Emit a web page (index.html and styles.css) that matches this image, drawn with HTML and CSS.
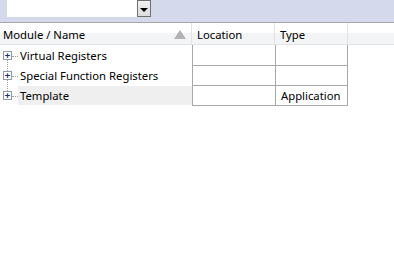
FILE: index.html
```html
<!DOCTYPE html>
<html lang="en">
<head>
  <meta charset="UTF-8">
  <title>Modules</title>
  <link rel="stylesheet" href="styles.css">
</head>
<body>
  <div class="toolbar">
    <div class="combo">
      <div class="combo-field"></div>
      <div class="combo-button"><span class="arrow"></span></div>
    </div>
  </div>

  <div class="grid">
    <div class="head name">Module / Name <span class="sort"></span></div>
    <div class="head">Location</div>
    <div class="head">Type</div>
    <div class="head filler"></div>

    <div class="tree first"><span class="expander">+</span><span class="label">Virtual Registers</span></div>
    <div class="cell"></div>
    <div class="cell last"></div>
    <div class="filler-cell"></div>

    <div class="tree"><span class="expander">+</span><span class="label">Special Function Registers</span></div>
    <div class="cell"></div>
    <div class="cell last"></div>
    <div class="filler-cell"></div>

    <div class="tree final selected"><span class="expander">+</span><span class="label">Template</span></div>
    <div class="cell"></div>
    <div class="cell last">Application</div>
    <div class="filler-cell"></div>
  </div>
</body>
</html>
```

FILE: styles.css
```css
body {
  margin: 0;
  background: #fff;
  font-family: "Noto Sans", "Open Sans", sans-serif;
  font-size: 11.3px;
  color: #000;
}
.toolbar {
  height: 22px;
  background: #d4d9eb;
  border-bottom: 1px solid #a7a7a7;
}
.combo {
  display: flex;
  padding-left: 7px;
}
.combo-field {
  width: 130px;
  height: 17px;
  background: #fff;
}
.combo-button {
  width: 12px;
  height: 15px;
  border: 1px solid #6f6f6f;
  background: linear-gradient(#f2f2f2, #dcdcdc);
  display: flex;
  align-items: center;
  justify-content: center;
}
.arrow {
  width: 0;
  height: 0;
  border-left: 4px solid transparent;
  border-right: 4px solid transparent;
  border-top: 4px solid #000;
  margin-top: 2px;
}
.grid {
  display: grid;
  grid-template-columns: 192px 83px 73px 1fr;
  grid-template-rows: 22px 21px 20px 20px;
}
.head {
  background: linear-gradient(#fff 0%, #fff 45%, #f3f4f5 50%, #f3f4f5 100%);
  border-bottom: 1px solid #e3e3e3;
  border-right: 1px solid #e3e3e3;
  padding-left: 5px;
  padding-top: 2px;
  line-height: 19px;
  box-sizing: border-box;
}
.head.name {
  padding-left: 3px;
  position: relative;
}
.head.filler {
  border-right: none;
}
.sort {
  position: absolute;
  right: 5px;
  top: 7px;
  width: 0;
  height: 0;
  border-left: 6px solid transparent;
  border-right: 6px solid transparent;
  border-bottom: 9px solid #b2b2b2;
}
.tree {
  display: flex;
  align-items: center;
  position: relative;
  border-bottom: 1px solid transparent;
}
.tree::before {
  content: "";
  position: absolute;
  left: 7px;
  top: 0;
  bottom: 0;
  border-left: 1px dotted #a0a0a0;
}
.tree.first::before {
  top: 10px;
}
.tree.final::before {
  bottom: 10px;
}
.tree.selected .label {
  background: #efefef;
}
.expander {
  position: relative;
  z-index: 1;
  margin-left: 3px;
  width: 7px;
  height: 7px;
  border: 1px solid #8e99aa;
  background: #fff;
  color: #1d2e66;
  font-size: 9px;
  line-height: 7px;
  text-align: center;
  font-family: "DejaVu Sans Mono", monospace;
  font-weight: bold;
}
.label {
  flex: 1;
  align-self: stretch;
  display: flex;
  align-items: center;
  margin-left: 6px;
  padding-left: 2px;
  position: relative;
  background: #fff;
}
.label::before {
  content: "";
  position: absolute;
  left: -6px;
  width: 6px;
  top: 50%;
  border-top: 1px dotted #a0a0a0;
}
.cell {
  border-left: 1px solid #a8a8a8;
  border-bottom: 1px solid #a8a8a8;
  padding-left: 5px;
  line-height: 19px;
}
.cell.last {
  border-right: 1px solid #a8a8a8;
}
.grid > .tree:nth-child(5),
.grid > .cell:nth-child(6),
.grid > .cell:nth-child(7) {
  padding-top: 1px;
}
```
